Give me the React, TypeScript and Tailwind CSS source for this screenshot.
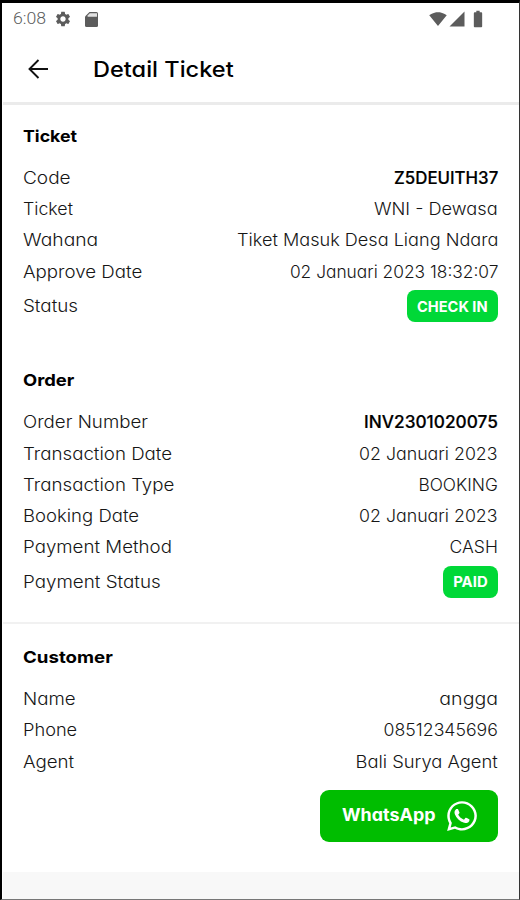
import type { ReactNode } from "react";
import { FaWhatsapp } from "react-icons/fa";
import { MdBatteryFull, MdSettings, MdSignalCellular4Bar, MdSignalWifi4Bar } from "react-icons/md";

type RowProps = {
  label: string;
  value: string;
  labelClass?: string;
  valueClass?: string;
};

function Row({ label, value, labelClass = "scale-x-[1.1]", valueClass = "scale-x-[1.045]" }: RowProps) {
  return (
    <div className="flex h-[31.25px] items-center justify-between pt-[1.5px] whitespace-nowrap">
      <span className={`origin-left font-light ${labelClass}`}>{label}</span>
      <span className={`origin-right font-light ${valueClass}`}>{value}</span>
    </div>
  );
}

function BadgeRow({ label, children }: { label: string; children: ReactNode }) {
  return (
    <div className="flex h-[37.5px] items-center justify-between whitespace-nowrap">
      <span className="origin-left scale-x-[1.105] pt-[1.5px] font-light">{label}</span>
      {children}
    </div>
  );
}

function StatusBar() {
  return (
    <div className="flex h-[32px] items-center pl-[10px] pr-[31px] text-[#5c5c5c]">
      <span className="w-[41px] origin-left scale-x-[1.04] font-[Roboto,sans-serif] text-[17px] font-light">6:08</span>
      <MdSettings className="size-[18px]" />
      <svg viewBox="0 0 13 15" className="ml-[13px] h-[15px] w-[13px]">
        <path d="M4.5 0H11.5Q13 0 13 1.5V13.5Q13 15 11.5 15H1.5Q0 15 0 13.5V4.5Z" fill="currentColor" />
        <path d="M4.8 1.2H12V4.8H2.6V3.4Z" fill="#e2e2e2" />
      </svg>
      <div className="ml-auto flex items-center">
        <MdSignalWifi4Bar className="size-[18px]" />
        <MdSignalCellular4Bar className="ml-[1px] size-[18px]" />
        <MdBatteryFull className="ml-[2px] size-[20px]" />
      </div>
    </div>
  );
}

export default function App() {
  return (
    <main className="flex h-[900px] w-[520px] flex-col border-t-[3px] border-r border-b border-l-[2px] border-t-black border-r-[#333] border-b-[#777] border-l-black bg-white pl-px font-[Inter,sans-serif] text-[17px] text-[#161616] [font-feature-settings:'cv11']">
      <StatusBar />

      <header className="flex h-[70px] items-center border-b-[3px] border-[#ebebeb] pl-[25px]">
        <svg viewBox="0 0 20 20" className="size-[20px]" fill="none" stroke="#111" strokeWidth="1.9">
          <path d="M20 10H1.5M10.5 1L1.5 10L10.5 19" />
        </svg>
        <h1 className="ml-[45px] origin-left scale-x-[1.095] pt-px text-[21.5px] font-medium text-black">Detail Ticket</h1>
      </header>

      <section className="pt-[15px] pr-[21px] pl-5">
        <h2 className="h-[42.25px] w-fit origin-left scale-x-[1.07] pt-[4px] text-[16.6px] font-bold text-black">Ticket</h2>
        <Row label="Code" value="Z5DEUITH37" labelClass="scale-x-[1.12]" valueClass="scale-x-[0.99] !font-medium text-black [-webkit-text-stroke:0.2px]" />
        <Row label="Ticket" value="WNI - Dewasa" labelClass="scale-x-[1.045]" valueClass="scale-x-[1.07]" />
        <Row label="Wahana" value="Tiket Masuk Desa Liang Ndara" labelClass="scale-x-[1.135]" valueClass="scale-x-[1.065]" />
        <Row label="Approve Date" value="02 Januari 2023 18:32:07" valueClass="scale-x-[1.02]" />
        <BadgeRow label="Status">
          <span className="flex h-[32px] w-[91px] items-center justify-center rounded-lg bg-[#00d837] pt-px text-[14.2px] font-bold text-white">
            <span className="scale-x-[1.03]">CHECK IN</span>
          </span>
        </BadgeRow>
      </section>

      <section className="border-b-2 border-[#f1f1f1] pt-[39.75px] pr-[21px] pb-[21.75px] pl-5">
        <h2 className="h-[42.25px] w-fit origin-left scale-x-[1.11] pt-[3px] text-[16.6px] font-bold text-black">Order</h2>
        <Row label="Order Number" value="INV2301020075" valueClass="scale-x-[1.015] !font-medium text-black [-webkit-text-stroke:0.2px]" />
        <Row label="Transaction Date" value="02 Januari 2023" />
        <Row label="Transaction Type" value="BOOKING" valueClass="scale-x-[1.02]" />
        <Row label="Booking Date" value="02 Januari 2023" labelClass="scale-x-[1.09]" />
        <Row label="Payment Method" value="CASH" valueClass="scale-x-[1.03]" />
        <BadgeRow label="Payment Status">
          <span className="flex h-[32px] w-[55px] items-center justify-center rounded-lg bg-[#00d837] text-[14.2px] font-bold text-white">
            <span className="scale-x-[1.05]">PAID</span>
          </span>
        </BadgeRow>
      </section>

      <section className="flex-1 pt-[17px] pr-[21px] pl-5">
        <h2 className="h-[42.25px] w-fit origin-left scale-x-[1.125] pt-[4px] text-[16.6px] font-bold text-black">Customer</h2>
        <Row label="Name" value="angga" valueClass="scale-x-[1.15]" />
        <Row label="Phone" value="08512345696" labelClass="scale-x-[1.07]" valueClass="scale-x-[1.04]" />
        <Row label="Agent" value="Bali Surya Agent" valueClass="scale-x-[1.08]" />
        <button className="mt-[12.5px] ml-auto flex h-[52px] w-[178px] items-center rounded-[9px] bg-[#00bd00] pl-[22px] text-white">
          <span className="w-[103px] origin-left scale-x-[1.055] text-left text-[17px] font-bold">WhatsApp</span>
          <FaWhatsapp className="mt-px size-[34px]" />
        </button>
      </section>

      <footer className="h-[27px] bg-[#f8f8f8]" />
    </main>
  );
}
